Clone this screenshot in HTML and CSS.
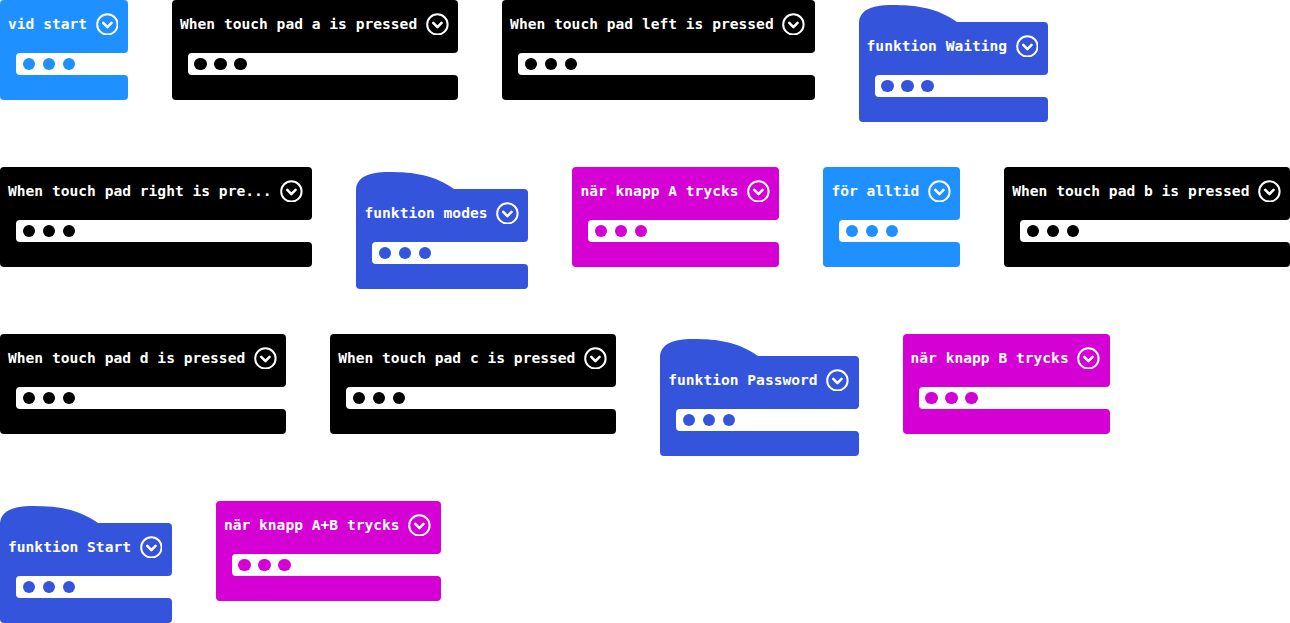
FILE: index.html
```html
<!DOCTYPE html>
<html lang="sv">
<head>
<meta charset="utf-8">
<title>Blocks</title>
<link rel="stylesheet" href="styles.css">
</head>
<body>
<div class="canvas">
  <div class="row">
    <div class="block blue">
      <div class="head"><span class="label">vid start</span><svg class="dd" viewBox="0 0 23 23"><circle cx="11.5" cy="11.5" r="10.3"/><path d="M7.3 10 L11.5 14.2 L15.7 10"/></svg></div>
      <div class="mid"><div class="slot"><i></i><i></i><i></i></div></div>
      <div class="foot"></div>
    </div>
    <div class="block black">
      <div class="head"><span class="label">When touch pad a is pressed</span><svg class="dd" viewBox="0 0 23 23"><circle cx="11.5" cy="11.5" r="10.3"/><path d="M7.3 10 L11.5 14.2 L15.7 10"/></svg></div>
      <div class="mid"><div class="slot"><i></i><i></i><i></i></div></div>
      <div class="foot"></div>
    </div>
    <div class="block black">
      <div class="head"><span class="label">When touch pad left is pressed</span><svg class="dd" viewBox="0 0 23 23"><circle cx="11.5" cy="11.5" r="10.3"/><path d="M7.3 10 L11.5 14.2 L15.7 10"/></svg></div>
      <div class="mid"><div class="slot"><i></i><i></i><i></i></div></div>
      <div class="foot"></div>
    </div>
    <div class="block fn">
      <svg class="hat" width="98" height="22" viewBox="0 0 98 22"><path d="M0 22 C1 10 13 5 33 5 C58 5 78 8 98 22 Z"/></svg>
      <div class="head"><span class="label">funktion Waiting</span><svg class="dd" viewBox="0 0 23 23"><circle cx="11.5" cy="11.5" r="10.3"/><path d="M7.3 10 L11.5 14.2 L15.7 10"/></svg></div>
      <div class="mid"><div class="slot"><i></i><i></i><i></i></div></div>
      <div class="foot"></div>
    </div>
  </div>

  <div class="row">
    <div class="block black">
      <div class="head"><span class="label">When touch pad right is pre...</span><svg class="dd" viewBox="0 0 23 23"><circle cx="11.5" cy="11.5" r="10.3"/><path d="M7.3 10 L11.5 14.2 L15.7 10"/></svg></div>
      <div class="mid"><div class="slot"><i></i><i></i><i></i></div></div>
      <div class="foot"></div>
    </div>
    <div class="block fn">
      <svg class="hat" width="98" height="22" viewBox="0 0 98 22"><path d="M0 22 C1 10 13 5 33 5 C58 5 78 8 98 22 Z"/></svg>
      <div class="head"><span class="label">funktion modes</span><svg class="dd" viewBox="0 0 23 23"><circle cx="11.5" cy="11.5" r="10.3"/><path d="M7.3 10 L11.5 14.2 L15.7 10"/></svg></div>
      <div class="mid"><div class="slot"><i></i><i></i><i></i></div></div>
      <div class="foot"></div>
    </div>
    <div class="block magenta">
      <div class="head"><span class="label">när knapp A trycks</span><svg class="dd" viewBox="0 0 23 23"><circle cx="11.5" cy="11.5" r="10.3"/><path d="M7.3 10 L11.5 14.2 L15.7 10"/></svg></div>
      <div class="mid"><div class="slot"><i></i><i></i><i></i></div></div>
      <div class="foot"></div>
    </div>
    <div class="block blue">
      <div class="head"><span class="label">för alltid</span><svg class="dd" viewBox="0 0 23 23"><circle cx="11.5" cy="11.5" r="10.3"/><path d="M7.3 10 L11.5 14.2 L15.7 10"/></svg></div>
      <div class="mid"><div class="slot"><i></i><i></i><i></i></div></div>
      <div class="foot"></div>
    </div>
    <div class="block black">
      <div class="head"><span class="label">When touch pad b is pressed</span><svg class="dd" viewBox="0 0 23 23"><circle cx="11.5" cy="11.5" r="10.3"/><path d="M7.3 10 L11.5 14.2 L15.7 10"/></svg></div>
      <div class="mid"><div class="slot"><i></i><i></i><i></i></div></div>
      <div class="foot"></div>
    </div>
  </div>

  <div class="row">
    <div class="block black">
      <div class="head"><span class="label">When touch pad d is pressed</span><svg class="dd" viewBox="0 0 23 23"><circle cx="11.5" cy="11.5" r="10.3"/><path d="M7.3 10 L11.5 14.2 L15.7 10"/></svg></div>
      <div class="mid"><div class="slot"><i></i><i></i><i></i></div></div>
      <div class="foot"></div>
    </div>
    <div class="block black">
      <div class="head"><span class="label">When touch pad c is pressed</span><svg class="dd" viewBox="0 0 23 23"><circle cx="11.5" cy="11.5" r="10.3"/><path d="M7.3 10 L11.5 14.2 L15.7 10"/></svg></div>
      <div class="mid"><div class="slot"><i></i><i></i><i></i></div></div>
      <div class="foot"></div>
    </div>
    <div class="block fn">
      <svg class="hat" width="98" height="22" viewBox="0 0 98 22"><path d="M0 22 C1 10 13 5 33 5 C58 5 78 8 98 22 Z"/></svg>
      <div class="head"><span class="label">funktion Password</span><svg class="dd" viewBox="0 0 23 23"><circle cx="11.5" cy="11.5" r="10.3"/><path d="M7.3 10 L11.5 14.2 L15.7 10"/></svg></div>
      <div class="mid"><div class="slot"><i></i><i></i><i></i></div></div>
      <div class="foot"></div>
    </div>
    <div class="block magenta">
      <div class="head"><span class="label">när knapp B trycks</span><svg class="dd" viewBox="0 0 23 23"><circle cx="11.5" cy="11.5" r="10.3"/><path d="M7.3 10 L11.5 14.2 L15.7 10"/></svg></div>
      <div class="mid"><div class="slot"><i></i><i></i><i></i></div></div>
      <div class="foot"></div>
    </div>
  </div>

  <div class="row">
    <div class="block fn">
      <svg class="hat" width="98" height="22" viewBox="0 0 98 22"><path d="M0 22 C1 10 13 5 33 5 C58 5 78 8 98 22 Z"/></svg>
      <div class="head"><span class="label">funktion Start</span><svg class="dd" viewBox="0 0 23 23"><circle cx="11.5" cy="11.5" r="10.3"/><path d="M7.3 10 L11.5 14.2 L15.7 10"/></svg></div>
      <div class="mid"><div class="slot"><i></i><i></i><i></i></div></div>
      <div class="foot"></div>
    </div>
    <div class="block magenta">
      <div class="head"><span class="label">när knapp A+B trycks</span><svg class="dd" viewBox="0 0 23 23"><circle cx="11.5" cy="11.5" r="10.3"/><path d="M7.3 10 L11.5 14.2 L15.7 10"/></svg></div>
      <div class="mid"><div class="slot"><i></i><i></i><i></i></div></div>
      <div class="foot"></div>
    </div>
  </div>
</div>
</body>
</html>
```

FILE: styles.css
```css
html, body {
  margin: 0;
  padding: 0;
  background: #ffffff;
  width: 1290px;
  height: 623px;
  overflow: hidden;
}

.canvas {
  display: flex;
  flex-direction: column;
  gap: 45px;
}

.row {
  display: flex;
  align-items: flex-start;
  gap: 44px;
  height: 122px;
}

.block {
  --c: #000000;
  display: flex;
  flex-direction: column;
  flex: none;
  font-family: "DejaVu Sans Mono", "Liberation Mono", monospace;
  font-weight: bold;
  font-size: 14.6px;
  color: #ffffff;
  white-space: nowrap;
}

.block.blue { --c: #1e90ff; }
.block.black { --c: #000000; }
.block.magenta { --c: #d400d4; }
.block.fn { --c: #3455db; }

.hat {
  display: block;
  flex: none;
}
.hat path { fill: var(--c); }

.head {
  display: flex;
  align-items: center;
  height: 53px;
  box-sizing: border-box;
  padding: 0 9.6px 6px 8px;
  background: var(--c);
  border-radius: 4px 4px 4px 0;
}
.fn .head {
  border-top-left-radius: 0;
}

.label {
  line-height: 17px;
}

.dd {
  width: 22.8px;
  height: 22.8px;
  margin-left: 8.5px;
  margin-top: 1px;
  flex: none;
}
.dd circle {
  fill: none;
  stroke: #ffffff;
  stroke-width: 2;
}
.dd path {
  fill: none;
  stroke: #ffffff;
  stroke-width: 2.6;
  stroke-linecap: round;
  stroke-linejoin: round;
}

.mid {
  height: 22px;
  background: linear-gradient(to right, var(--c) 21px, transparent 21px);
  display: flex;
}

.slot {
  flex: 1;
  margin-left: 16px;
  background: #ffffff;
  border-radius: 4px 0 0 4px;
  display: flex;
  align-items: center;
  gap: 7.5px;
  padding-left: 6.5px;
}

.slot i {
  display: block;
  width: 12.5px;
  height: 12.5px;
  border-radius: 50%;
  background: var(--c);
}

.foot {
  height: 25px;
  background: var(--c);
  border-radius: 0 4px 4px 4px;
}
```
